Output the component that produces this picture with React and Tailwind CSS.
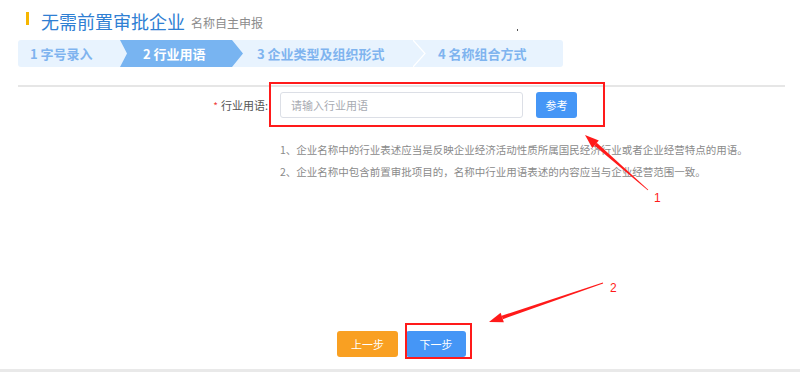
import React from 'react'

const font = { fontFamily: '"Noto Sans CJK SC", "Noto Sans", sans-serif' }

// red annotation arrow (tail -> tip), drawn over the page
function Arrow({ x1, y1, x2, y2 }) {
  const ang = Math.atan2(y2 - y1, x2 - x1)
  const len = 14
  const w = 5
  const bx = x2 - Math.cos(ang) * len
  const by = y2 - Math.sin(ang) * len
  const px = -Math.sin(ang) * w
  const py = Math.cos(ang) * w
  const tx = -Math.sin(ang) * 0.4
  const ty = Math.cos(ang) * 0.4
  const nx = -Math.sin(ang) * 1.8
  const ny = Math.cos(ang) * 1.8
  return (
    <g fill="#ff1a1a">
      <polygon points={`${x1 + tx},${y1 + ty} ${bx + nx},${by + ny} ${bx - nx},${by - ny} ${x1 - tx},${y1 - ty}`} />
      <polygon points={`${x2},${y2} ${bx + px},${by + py} ${bx - px},${by - py}`} />
    </g>
  )
}

export default function App() {
  return (
    <div className="relative w-[800px] h-[372px] bg-white overflow-hidden flex flex-col" style={font}>

      {/* Header */}
      <div className="pt-[10px] pl-[26px] h-[32px] flex items-center">
        <div className="w-[3px] h-[13px] bg-[#f6b600] mt-[-6px]" />
        <span className="ml-[12px] text-[18px] leading-[22px] text-[#2f7fd3]">无需前置审批企业</span>
        <span className="ml-[6px] text-[12px] leading-[22px] text-[#8c8c8c] mt-[3px]">名称自主申报</span>
      </div>

      {/* Steps */}
      <div className="mt-[8px] ml-[18px] w-[545px] h-[27px] rounded-[3px] bg-[#e8f3fe] flex items-stretch text-[13px] font-bold leading-[27px] text-[#7fb4ef]">
        <div className="w-[102px] pl-[12px]">1 字号录入</div>
        <div className="w-[123px] pl-[23px] bg-[#78b4f1] text-white [clip-path:polygon(0_0,calc(100%-11px)_0,100%_50%,calc(100%-11px)_100%,0_100%,7px_50%)]">2 行业用语</div>
        <div className="w-[170px] pl-[14px]">3 企业类型及组织形式</div>
        <svg width="13" height="27" viewBox="0 0 13 27" className="shrink-0">
          <polyline points="0,0 12,13.5 0,27" fill="none" stroke="#ffffff" strokeWidth="1.2" />
        </svg>
        <div className="pl-[12px]">4 名称组合方式</div>
      </div>

      {/* Divider */}
      <div className="mt-[18px] ml-[18px] w-[767px] border-t-2 border-[#e6e6e6]" />

      {/* Form row */}
      <div className="mt-[5px] h-[26px] flex items-center">
        <div className="w-[268px] flex justify-end items-center text-[11px] text-[#555]">
          <span className="text-[#f04040] mr-[3px] text-[10px]">*</span>
          <span>行业用语:</span>
        </div>
        <div className="ml-[12px] w-[243px] h-[26px] border border-[#dcdfe6] rounded-[3px] flex items-center pl-[10px] text-[11px] text-[#a8abb2]">
          请输入行业用语
        </div>
        <button className="ml-[13px] w-[41px] h-[26px] rounded-[3px] bg-[#4596f6] text-white text-[11px]">参考</button>
      </div>

      {/* Notes */}
      <div className="mt-[21px] pl-[280px] text-[10.5px] leading-[22px] text-[#8a8a8a]">
        <p>1、企业名称中的行业表述应当是反映企业经济活动性质所属国民经济行业或者企业经营特点的用语。</p>
        <p>2、企业名称中包含前置审批项目的，名称中行业用语表述的内容应当与企业经营范围一致。</p>
      </div>

      {/* Buttons */}
      <div className="mt-[148px] pl-[337px] flex gap-[8px]">
        <button className="w-[61px] h-[26px] rounded-[3px] bg-[#f9a022] text-white text-[11px]">上一步</button>
        <button className="w-[60px] h-[26px] rounded-[3px] bg-[#4596f6] text-white text-[11px]">下一步</button>
      </div>

      {/* Bottom edge */}
      <div className="mt-[12px] h-[3px] bg-[#e9e9e9]" />

      {/* Annotations */}
      <div className="absolute left-[269px] top-[82px] w-[336px] h-[45px] border-2 border-[#ff1a1a]" />
      <div className="absolute left-[405px] top-[323px] w-[67px] h-[36px] border-2 border-[#ff1a1a]" />
      <div className="absolute left-[517px] top-[29px] w-[1px] h-[2px] bg-[#555]" />
      <svg className="absolute left-0 top-0" width="800" height="372">
        <Arrow x1={648} y1={190} x2={585} y2={135} />
        <Arrow x1={603} y1={283} x2={489} y2={322} />
        <text x="654" y="202" fill="#ff1a1a" fontSize="12" fontFamily="Liberation Sans, sans-serif">1</text>
        <text x="610" y="292" fill="#ff1a1a" fontSize="12" fontFamily="Liberation Sans, sans-serif">2</text>
      </svg>
    </div>
  )
}
